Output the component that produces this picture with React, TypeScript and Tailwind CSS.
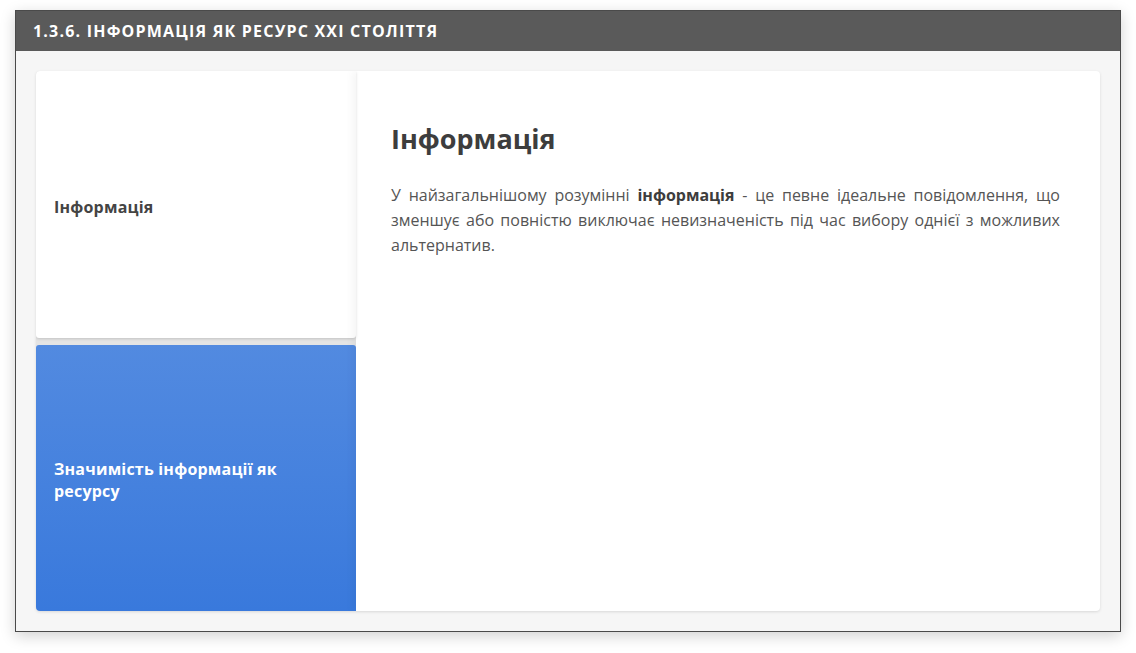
import React from 'react'

const tabs = ['Інформація', 'Значимість інформації як ресурсу']

export default function App() {
  const active = 0

  return (
    <div className="w-[1136px] h-[653px] bg-white pt-[10px] pl-[15px] font-['Open_Sans',sans-serif]">
      <div className="w-[1106px] h-[622px] flex flex-col border border-[#4a4a4a] bg-[#f6f6f6] shadow-[0_4px_14px_rgba(0,0,0,0.18)]">
        <div className="h-[40px] shrink-0 bg-[#5a5a5a] flex items-center px-[17px] text-white text-[16px] font-bold tracking-[1.2px]">
          1.3.6. ІНФОРМАЦІЯ ЯК РЕСУРС XXI СТОЛІТТЯ
        </div>
        <div className="flex-1 p-[20px]">
          <div className="h-full flex rounded-[4px] bg-white shadow-[0_1px_3px_rgba(0,0,0,0.12)] overflow-hidden">
            {/* tabs */}
            <div className="w-[320px] shrink-0 flex flex-col gap-[7px] bg-[#e4e4e4]">
              {tabs.map((t, i) =>
                i === active ? (
                  <div
                    key={t}
                    className="flex-1 flex items-center px-[18px] pt-[5px] bg-white rounded-b-[3px] shadow-[0_1px_3px_rgba(0,0,0,0.15)] text-[16px] font-bold text-[#444] leading-[22px] tracking-[0.2px]"
                  >
                    {t}
                  </div>
                ) : (
                  <div
                    key={t}
                    className="flex-1 flex items-center px-[18px] pr-[60px] pt-[5px] rounded-t-[3px] bg-gradient-to-b from-[#528ae0] to-[#3979dc] text-[16px] font-bold text-white leading-[22px] tracking-[0.2px]"
                  >
                    {t}
                  </div>
                )
              )}
            </div>
            {/* content */}
            <div className="flex-1 pl-[35px] pr-[40px] pt-[50px] shadow-[-4px_0_8px_rgba(0,0,0,0.04)]">
              <h1 className="text-[27px] font-bold text-[#3d3d3d] leading-[36px]">Інформація</h1>
              <p className="mt-[26px] text-[16px] leading-[25px] text-[#555] text-justify">
                У найзагальнішому розумінні <b className="text-[#3d3d3d]">інформація</b> - це певне ідеальне повідомлення, що зменшує або повністю виключає невизначеність під час вибору однієї з можливих альтернатив.
              </p>
            </div>
          </div>
        </div>
      </div>
    </div>
  )
}
